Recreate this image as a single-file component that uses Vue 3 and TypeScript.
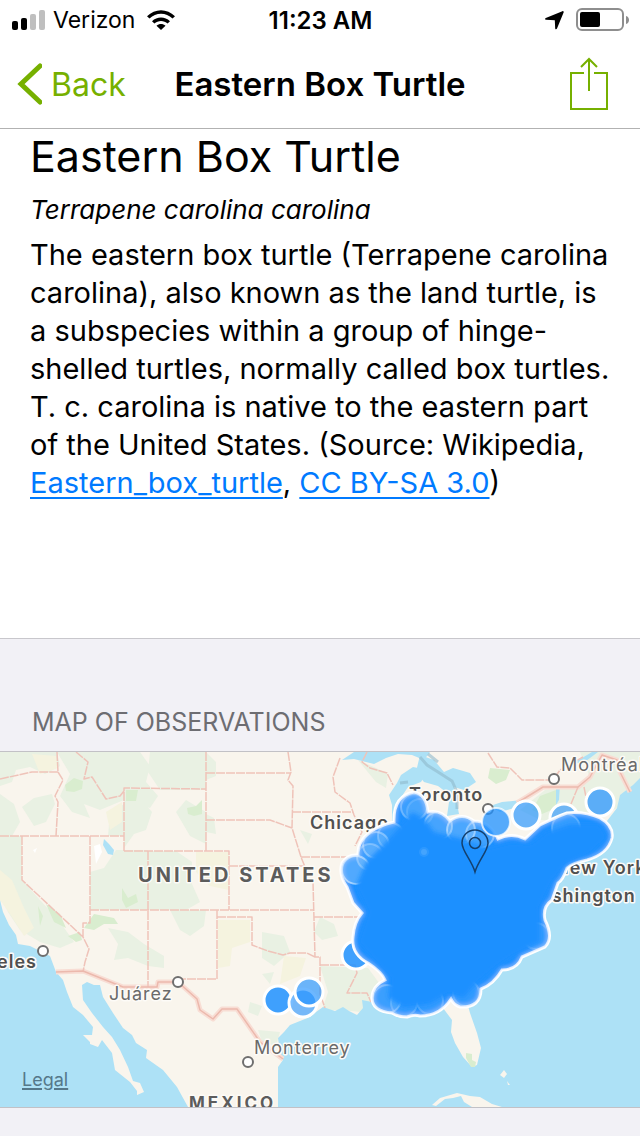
<script setup lang="ts">
interface Dot {
  x: number
  y: number
  r: number
  o: number
}

interface Label {
  text: string
  x: number
  y: number
  kind: string
}

const farDots: Dot[] = [
  { x: 278, y: 248, r: 14, o: 0.85 },
  { x: 303, y: 251, r: 14, o: 0.6 },
  { x: 309, y: 240, r: 14, o: 0.65 },
  { x: 526, y: 63, r: 14, o: 0.65 },
  { x: 600, y: 50, r: 14, o: 0.7 },
  { x: 564, y: 66, r: 14, o: 0.6 },
  { x: 356, y: 203, r: 14, o: 0.85 },
]

const edgeDots: Dot[] = [
  { x: 496, y: 70, r: 14, o: 0.75 },
]

const rings: Dot[] = [
  { x: 414, y: 55, r: 13, o: 0.6 },
  { x: 420, y: 60, r: 13, o: 0.3 },
  { x: 356, y: 118, r: 14, o: 1 },
  { x: 370, y: 105, r: 13, o: 0.6 },
  { x: 376, y: 93, r: 13, o: 0.7 },
  { x: 391, y: 84, r: 13, o: 0.5 },
  { x: 438, y: 74, r: 14, o: 0.8 },
  { x: 461, y: 78, r: 14, o: 0.9 },
  { x: 480, y: 82, r: 14, o: 0.7 },
  { x: 566, y: 76, r: 14, o: 0.5 },
  { x: 387, y: 247, r: 14, o: 0.6 },
  { x: 404, y: 251, r: 13, o: 0.4 },
  { x: 430, y: 249, r: 13, o: 0.4 },
  { x: 466, y: 241, r: 13, o: 0.4 },
  { x: 536, y: 184, r: 13, o: 0.4 },
]

const cities = [
  { x: 43, y: 199 },
  { x: 178, y: 230 },
  { x: 248, y: 310 },
  { x: 554, y: 27 },
  { x: 488, y: 57 },
]

const labels: Label[] = [
  { text: 'Montréal', x: 561, y: 19, kind: 'city' },
  { text: 'Toronto', x: 409, y: 49, kind: 'major' },
  { text: 'Chicago', x: 310, y: 77, kind: 'major' },
  { text: 'New York', x: 555, y: 122, kind: 'major' },
  { text: 'Washington', x: 522, y: 150, kind: 'major' },
  { text: 'Juárez', x: 109, y: 248, kind: 'city' },
  { text: 'Monterrey', x: 254, y: 302, kind: 'city' },
  { text: 'UNITED STATES', x: 138, y: 130, kind: 'country' },
  { text: 'MEXICO', x: 189, y: 357, kind: 'country lesser' },
]
</script>

<template>
  <div class="screen">
    <header class="top">
      <div class="status">
        <div class="side">
          <svg class="signal" width="34" height="20" viewBox="0 0 34 20" aria-hidden="true">
            <rect x="0" y="11" width="6" height="9" rx="2" />
            <rect x="9" y="8" width="6" height="12" rx="2" />
            <rect x="18" y="4" width="6" height="16" rx="2" fill="#bfbfbf" />
            <rect x="27" y="0" width="6" height="20" rx="2" fill="#bfbfbf" />
          </svg>
          <span class="carrier">Verizon</span>
          <svg width="28" height="20" viewBox="0 0 28 20" aria-hidden="true">
            <path d="M0 6.2C8-1.8 20-1.8 28 6.2L25.500 8.600C19 2.200 9 2.200 2.500 8.600Z" />
            <path d="M5 11.200C10 6.300 18 6.300 23 11.200L20.600 13.600C17 10 11 10 7.400 13.600Z" />
            <path d="M9.500 15.700C12 13.300 16 13.300 18.500 15.700L14 20Z" />
          </svg>
        </div>
        <span class="clock">11:23 AM</span>
        <div class="side end">
          <svg width="19" height="19" viewBox="0 0 19 19" aria-hidden="true">
            <path d="M17.400.2C18.300-.1 19 .5 18.600 1.500L12 17.600C11.500 18.700 10.300 18.500 10.200 17.400L9.800 9.200L1 8.800C-.2 8.700-.3 7.600.8 7.100Z" />
          </svg>
          <svg width="53" height="24" viewBox="0 0 53 24" aria-hidden="true">
            <rect x="1" y="1" width="46" height="21" rx="5" fill="none" stroke="#8e8e8e" stroke-width="2" />
            <rect x="4" y="4" width="20" height="15" rx="2" />
            <path d="M50 8C54 9 54 15 50 16Z" fill="#8e8e8e" />
          </svg>
        </div>
      </div>
      <nav class="nav">
        <button class="back" type="button">
          <svg width="26" height="42" viewBox="0 0 26 42" aria-hidden="true">
            <path d="M24 3L5 21L24 39" fill="none" stroke="currentColor" stroke-width="5" stroke-linecap="round" />
          </svg>
          <span>Back</span>
        </button>
        <span class="title">Eastern Box Turtle</span>
        <button class="share" type="button" aria-label="Share">
          <svg width="38" height="54" viewBox="0 0 38 54" aria-hidden="true">
            <path d="M14 16H1V52H37V16H24M19 34V2M11 10L19 2L27 10" fill="none" stroke="currentColor" stroke-width="2" />
          </svg>
        </button>
      </nav>
    </header>

    <main>
      <article class="about">
        <h1>Eastern Box Turtle</h1>
        <p class="latin">Terrapene carolina carolina</p>
        <p class="body">
          The eastern box turtle (Terrapene carolina<br />
          carolina), also known as the land turtle, is<br />
          a subspecies within a group of hinge-<br />
          shelled turtles, normally called box turtles.<br />
          T. c. carolina is native to the eastern part<br />
          of the United States. (Source: Wikipedia,<br />
          <a href="#wiki">Eastern_box_turtle</a>, <a href="#license">CC BY-SA 3.0</a>)
        </p>
      </article>

      <section>
        <h2>MAP OF OBSERVATIONS</h2>
        <div class="map">
          <svg class="canvas" viewBox="0 0 640 355" role="img" aria-label="Map of observations">
            <defs>
              <filter id="soft" x="-10%" y="-10%" width="120%" height="120%">
                <feGaussianBlur stdDeviation="2" />
              </filter>
              <clipPath id="mass">
                <use href="#range" />
              </clipPath>
            </defs>
            <rect width="640" height="355" fill="#f9f5ed" />

            <!-- vegetation -->
            <g fill="#e9f1e3">
              <path d="M0 0H57L60 14L45 22L30 15L16 18L12 30L0 34ZM0 42L14 52L20 70L12 84H0ZM22 55L34 46L52 42L55 52L46 70L34 74Z" />
              <path d="M57 0H140L150 14L146 30L158 44L150 56L124 48L100 58L84 52L90 66L72 60L60 44L70 22Z" />
              <path d="M150 0H206V38H160L148 20ZM124 40L138 44L152 60L146 78L134 82L124 96ZM110 62L124 52V84H108Z" />
              <path d="M0 84H22V128L40 148L60 170L74 190L60 196L40 190L20 178L8 160L0 142Z" />
              <path d="M90 120L104 116L116 98H148V158H90ZM148 99H176L192 110V132L200 150L186 158H148ZM176 60L186 48L206 60V92L190 84Z" />
              <path d="M108 176L128 180L144 192L164 204V216L148 214L128 206L114 208L118 192ZM170 158H206L204 174L190 184L180 178Z" />
              <path d="M206 0L216 10V24L206 28ZM206 62L214 66L216 82L206 80ZM320 165L334 172L338 184L322 188L314 180Z" />
              <path d="M262 180L284 184L290 200L274 214L262 206ZM250 250L262 254L258 264L248 260ZM258 278L280 280L276 294L262 290ZM262 222L274 220L270 232Z" />
              <path d="M320 214L368 216L382 235V262L340 258L322 258L328 240ZM358 8L376 16L388 22L386 36L376 30Z" />
              <path d="M300 78L312 82L308 92ZM580 0H640V30L617 56L590 70L540 68L520 58L545 38L575 36L590 26Z" />
            </g>
            <g fill="#f5f3df">
              <path d="M32 2L56 4L58 16L40 22ZM106 60L122 50L122 70L110 78ZM0 118L12 128L24 156L34 176L24 184L10 162L0 148Z" />
              <path d="M196 100L229 100V138L210 134L196 120ZM218 168H250V190L232 196L230 214L218 216ZM284 204L306 206L300 224L280 232Z" />
            </g>
            <g fill="#d9edcf">
              <path d="M65 33L74 26L83 29L82 37L74 40L66 39ZM126 38H138L136 49H126ZM187 56L196 54L202 48V62L194 64L188 62Z" />
              <path d="M122 136L128 146L136 142L138 150L126 156L122 148ZM94 162L114 166L118 172L104 172L94 178L84 176ZM38 154L43 164L40 174ZM46 152L60 162L66 176L54 170ZM68 184L80 180L82 188L76 190Z" />
              <path d="M490 16L510 18L506 28L496 32L488 26ZM540 44L556 38L556 56L542 62L532 58Z" />
            </g>
            <path d="M94 94L100 92L102 100L96 112ZM33 98L37 96L35 101Z" fill="#fff" />
            <path d="M104 87L109 92L114 98L113 103L108 102L103 93Z" fill="#ade1f6" />

            <!-- oceans and lakes -->
            <g fill="#ade1f6">
              <path d="M0 148L3 160L9 173L16 183L18 192L30 194L38 198L50 204L56 220L63 228L67 240L73 255L83 263L93 275L92 283L83 283L90 290V292L98 295L102 288L112 301L115 318L130 330L137 339V343L144 340L140 331L133 329L128 315L120 298L112 285L103 275L92 261L83 248L82 233L87 230L94 233L100 233L103 245L113 261L123 276L132 283L136 291L147 298L146 306L163 318L177 335L188 355H0Z" />
              <path d="M278 355V315L283 308L280 300L278 286L284 280L290 273L300 269L310 265L316 260L323 255L335 259L343 255L349 259L357 263L363 256L362 248L377 251L400 244L440 252L452 268L451 280L455 291L463 305L472 315L477 313L481 296L477 281L470 261L467 250L500 218L532 180L560 120L600 78L617 56L620 43L633 33L640 26V355Z" />
              <path d="M342 8L354 0H430L424 8L412 3L398 2L386 6L374 12L362 9L354 7ZM389 43L397 31L401 23L413 15L428 18L421 30L408 35L398 50L400 70H392V53Z" />
              <path d="M420 3L434 8L444 20L453 16L470 21L476 30L464 38L454 35L459 62L447 64L450 43L438 34L424 30L416 20ZM490 54L502 50L522 48L518 55L500 60ZM572 10L582 6L592 0H598L582 12ZM556 35L560 32L559 48L556 53Z" />
            </g>
            <path d="M420 5L427 13L438 20L452 29L457 40V57M400 31L408 30M428 2L438 10" fill="none" stroke="#8fb9cb" stroke-width="3" opacity="0.6" />
            <path d="M432 353L440 346L457 341L470 344L480 345L492 352L502 355H472L464 350L461 344L453 346L445 347L436 354ZM504 318L507 322L504 326L500 323ZM507 329L510 333L508 333Z" fill="#f9f5ed" />
            <path d="M466 301L472 302V308L476 310L475 315H471L466 306Z" fill="#d9edcf" />

            <!-- state and national borders -->
            <g fill="none" stroke-linejoin="round">
              <path class="halo" d="M56 220L83 219L123 235H157L158 230H178L197 247L200 258L213 267L222 257H237L260 290L283 307M517 51L543 35H578L590 25L602 3L617 8L620 20L630 40" />
              <path class="state" d="M0 27L32 20H58M57 0L58 20L63 28L55 44L58 50L56 84M76 0L88 10L84 27L92 25L106 47L120 44L124 39M0 84H124M124 99V36L206 37M206 0V99M124 99H229V158M22 84V128L83 185L89 197L85 210L83 220M90 84V171H83V185M148 99V235M90 158H313" />
              <path class="state" d="M206 21H291M206 68H270L292 76M288 0L291 20L288 28L293 34L292 76L301 105L305 115M229 114H305M292 60H353M301 105H348M340 6L333 25L335 40L350 51L354 63L362 80L355 94M313 130L315 205H320V242L325 256M217 158V227H178M217 165H252V193L268 199L283 203L290 201L307 201L315 205M314 165H361M320 213H355L357 221L347 241H367L371 250" />
              <path class="state" d="M367 0L362 10L370 16L387 21L393 33M488 1L497 15L510 16L522 28H553L560 18L583 5M578 35L571 52M584 35L588 55" />
              <path class="nation" d="M56 220L83 219L123 235H157L158 230H178L197 247L200 258L213 267L222 257H237L260 290L283 307M517 51L543 35H578L590 25L602 3L617 8L620 20L630 40" />
            </g>

            <circle v-for="c in cities" :key="c.x" :cx="c.x" :cy="c.y" r="5" fill="#fff" stroke="#6f6f6f" stroke-width="2" />
            <text v-for="l in labels" :key="l.text" :class="['label', l.kind]" :x="l.x" :y="l.y">{{ l.text }}</text>
            <text class="label major" x="37" y="216" text-anchor="end">Los Angeles</text>

            <!-- observations -->
            <g fill="#1e90ff" stroke="#fff" stroke-width="3">
              <circle v-for="d in farDots" :key="d.x" :cx="d.x" :cy="d.y" :r="d.r" :fill-opacity="d.o" />
            </g>
            <path id="range" class="range" d="M394 70Q393 44 414 40Q426 42 428 60Q441 57 450 69Q462 60 474 69Q490 69 498 87Q512 80 525 87L540 73Q556 65 567 61Q584 59 600 66Q614 74 612 86Q608 102 587 108Q572 111 567 116Q563 128 558 131L552 148Q542 155 545 168Q554 186 545 195L522 205Q517 218 502 218Q494 232 481 237Q481 256 460 255Q454 253 451 247Q440 264 420 264Q414 262 407 265Q398 265 392 261Q372 259 372 246Q372 234 385 228Q382 220 368 211Q351 202 353 185Q354 170 362 161L353 151L347 135Q338 122 342 111Q347 102 358 103Q357 90 370 80Q380 73 394 70Z" />
            <g clip-path="url(#mass)">
              <use href="#range" class="rim" filter="url(#soft)" />
              <g fill="#b4d9fc" fill-opacity="0.35" stroke="#e4f2ff" stroke-opacity="0.6" stroke-width="2">
                <circle v-for="d in rings" :key="d.x" :cx="d.x" :cy="d.y" :r="d.r" :opacity="d.o" />
              </g>
              <path filter="url(#soft)" fill="#1e90ff" d="M402 72L412 60L424 66L434 80L460 86L488 96L512 90L530 92L546 80L570 72L600 72L608 86L590 102L566 112L552 130L540 156L540 190L516 202L498 214L474 234L464 246L448 242L430 252L404 256L388 246L390 226L372 206L358 190L368 160L356 134L366 110L384 92Z" />
              <g fill="#8cc6fc">
                <circle cx="424" cy="100" r="5" opacity="0.15" />
                <circle cx="424" cy="100" r="3" opacity="0.25" />
              </g>
            </g>
            <g fill="#1e90ff" stroke="#fff" stroke-width="2">
              <circle v-for="d in edgeDots" :key="d.x" :cx="d.x" :cy="d.y" :r="d.r" :fill-opacity="d.o" :stroke-opacity="d.o" />
            </g>
            <g fill="none" stroke="#14406e" stroke-width="1.500">
              <path d="M475 120C472 109 462 99 462 91A13 13 0 0 1 488 91C488 99 478 109 475 120Z" />
              <circle cx="475" cy="91" r="5.500" />
            </g>
          </svg>
          <a class="legal" href="#legal">Legal</a>
        </div>
      </section>
    </main>
  </div>
</template>

<style>
body {
  margin: 0;
  background: #f2f1f6;
}
</style>

<style scoped>
.screen {
  min-height: 100vh;
  background: #f2f1f6;
  color: #000;
  font-family: Inter, "Liberation Sans", sans-serif;
}
.top {
  background: #fff;
  border-bottom: 1px solid #b2b2b2;
}
.status {
  display: grid;
  grid-template-columns: 1fr auto 1fr;
  align-items: center;
  height: 40px;
  padding: 0 11px 0 12px;
  font-size: 23px;
}
.side {
  display: flex;
  align-items: center;
  gap: 12px;
}
.signal {
  margin-right: -5px;
}
.end {
  justify-content: flex-end;
}
.clock {
  font-size: 24px;
  font-weight: 600;
}
.nav {
  display: grid;
  grid-template-columns: 1fr auto 1fr;
  align-items: center;
  height: 88px;
  padding: 0 16px;
}
.back,
.share {
  display: flex;
  align-items: center;
  border: 0;
  padding: 0;
  background: none;
  color: #76b000;
  font: inherit;
}
.back {
  gap: 9px;
  font-size: 32px;
}
.share {
  justify-self: end;
  padding-right: 16px;
}
.title {
  font-size: 33px;
  font-weight: 600;
}
.about {
  min-height: 509px;
  box-sizing: border-box;
  padding: 3px 16px 0 30px;
  background: #fff;
}
h1,
h2,
p {
  margin: 0;
  font-weight: 400;
}
h1 {
  font-size: 43px;
  line-height: 48px;
}
.latin {
  margin-top: 12px;
  font-size: 26px;
  line-height: 36px;
  font-style: italic;
}
.body {
  margin-top: 8px;
  font-size: 29px;
  line-height: 38px;
}
.body a {
  color: #007aff;
  text-decoration-thickness: 2px;
  text-underline-offset: 4px;
}
h2 {
  border-top: 1px solid #c8c7cc;
  padding: 67px 32px 13px;
  color: #6d6d72;
  font-size: 25px;
  line-height: 32px;
}
.map {
  position: relative;
  border-top: 1px solid #c2c1c6;
  border-bottom: 1px solid #c2c1c6;
}
.canvas {
  display: block;
  width: 100%;
}
.state {
  stroke: #efc3b9;
  stroke-width: 1.5;
  stroke-dasharray: 9 1;
}
.halo {
  stroke: #f8ddd4;
  stroke-width: 5;
}
.nation {
  stroke: #ecb9ad;
  stroke-width: 1.5;
}
.label {
  font-size: 18px;
  letter-spacing: 1px;
  fill: #5c5c5c;
  stroke: #fdfbf7;
  stroke-width: 3px;
  stroke-linejoin: round;
  paint-order: stroke;
}
.city {
  fill: #6a6a6a;
}
.major {
  font-weight: 600;
  fill: #505050;
}
.country {
  font-size: 20px;
  font-weight: 700;
  letter-spacing: 3px;
}
.lesser {
  font-size: 17px;
}
.range {
  fill: #1e90ff;
  stroke: #fff;
  stroke-width: 3;
}
.rim {
  opacity: 0.5;
}
.legal {
  position: absolute;
  left: 22px;
  bottom: 16px;
  color: #55788a;
  font-size: 18px;
  line-height: 22px;
  text-decoration-thickness: 2px;
  text-underline-offset: 2px;
}
</style>
